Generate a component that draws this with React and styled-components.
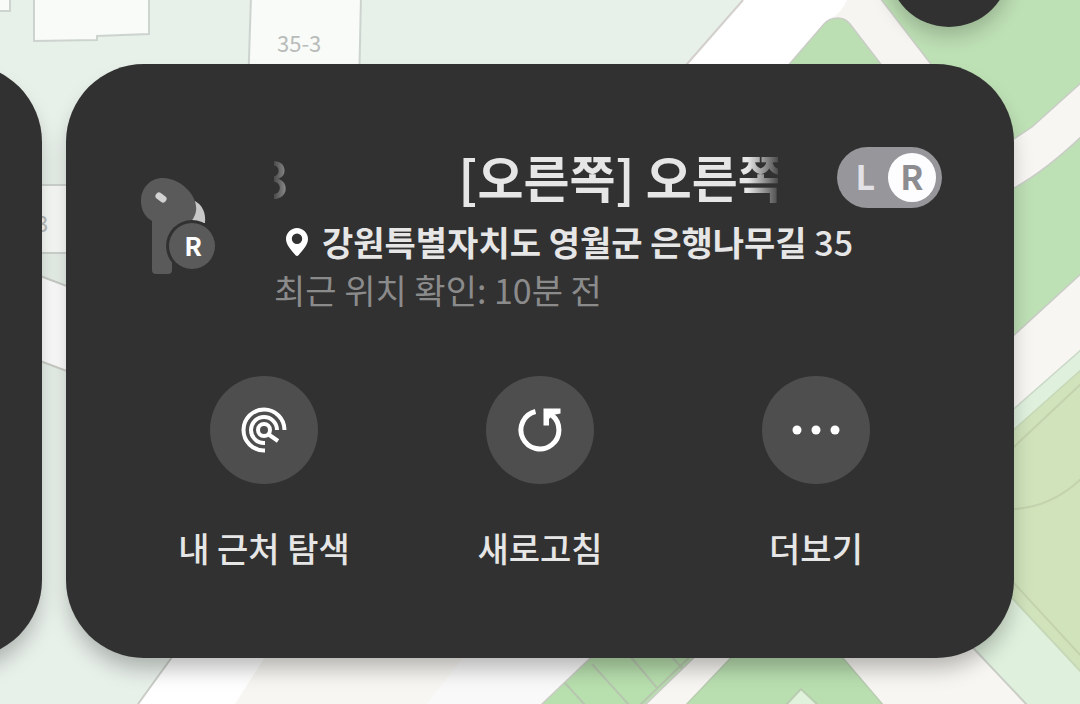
import React, { useState } from "react";
import styled, { createGlobalStyle } from "styled-components";

const GlobalStyle = createGlobalStyle`
  *, *::before, *::after { box-sizing: border-box; }
  body {
    margin: 0;
    font-family: "Noto Sans CJK KR", "Noto Sans", sans-serif;
    color: #e6e6e6;
    background: #e8f0ea;
  }
  button { font: inherit; color: inherit; border: 0; padding: 0; background: none; cursor: pointer; }
  h1, p { margin: 0; }
`;

const Screen = styled.div`
  position: relative;
  min-height: 100vh;
  overflow: hidden;
`;

const MapCanvas = styled.svg`
  position: absolute;
  inset: 0;
  width: 100%;
  height: 100%;
`;

const MapButton = styled.button`
  position: absolute;
  top: -95px;
  right: 70px;
  width: 122px;
  height: 122px;
  border-radius: 50%;
  background: #313131;
  box-shadow: 0 8px 20px rgba(0, 0, 0, 0.22);
`;

const Carousel = styled.main`
  position: relative;
  display: flex;
  gap: 24px;
  padding: 64px 66px 46px 0;
`;

const Panel = styled.section`
  border-radius: 78px;
  background: #313131;
  box-shadow: 0 14px 22px -4px rgba(0, 0, 0, 0.28);
`;

const PeekPanel = styled(Panel)`
  flex: none;
  width: 160px;
  margin-left: -118px;
`;

const DevicePanel = styled(Panel)`
  flex: 1;
  min-width: 0;
  padding: 83px 0 86px;
`;

const Header = styled.header`
  display: grid;
  grid-template-columns: 74px 1fr auto;
  grid-template-rows: 71px auto;
  column-gap: 59px;
  padding: 0 72px 0 75px;
`;

const BudArt = styled.svg`
  grid-row: 1 / 3;
  width: 74px;
  height: 95px;
  margin-top: 32px;
  overflow: visible;
`;

const Marquee = styled.h1`
  display: flex;
  gap: 170px;
  min-width: 0;
  overflow: hidden;
  white-space: pre;
  font-size: 50px;
  font-weight: 700;
  line-height: 58px;
  mask-image: linear-gradient(
    to right,
    rgba(0, 0, 0, 0.15) 0,
    #000 30px,
    #000 calc(100% - 30px),
    rgba(0, 0, 0, 0.15) 100%
  );
`;

const Leaving = styled.span`
  margin-left: -14px;
  font-weight: 500;
`;

const SideSwitch = styled.div`
  display: flex;
  justify-content: space-between;
  align-self: start;
  width: 105px;
  padding: 6px;
  border-radius: 31px;
  background: #96969b;
`;

const Side = styled.button`
  width: ${(p) => (p.$active ? 49 : 45)}px;
  height: 49px;
  padding-bottom: 4px;
  border-radius: 50%;
  font-size: 34px;
  font-weight: 700;
  line-height: 45px;
  text-align: center;
  color: ${(p) => (p.$active ? "#8c8c91" : "#e2e2e6")};
  background: ${(p) => (p.$active ? "#fdfdff" : "transparent")};
`;

const Details = styled.div`
  grid-column: 2 / 4;
  font-size: 34px;
  line-height: 48px;
  white-space: nowrap;
`;

const Address = styled.p`
  display: flex;
  align-items: center;
  gap: 14px;
  padding-left: 12px;
  font-weight: 700;
`;

const HouseNumber = styled.span`
  font-weight: 500;
`;

const Checked = styled.p`
  color: #8b8b8c;
`;

const Actions = styled.nav`
  display: grid;
  grid-template-columns: repeat(3, 1fr);
  padding: 62px 60px 0;
`;

const Action = styled.button`
  display: flex;
  flex-direction: column;
  align-items: center;
  gap: 40px;
  font-size: 34px;
  font-weight: 500;
  line-height: 48px;
  white-space: nowrap;
`;

const Disc = styled.span`
  display: grid;
  place-items: center;
  width: 108px;
  height: 108px;
  border-radius: 50%;
  background: #4e4e4e;
`;

function StreetMap() {
  const edge = "#c9cdc6";
  return (
    <MapCanvas viewBox="0 0 1080 704" preserveAspectRatio="xMidYMid slice" aria-hidden="true">
      <rect width="1080" height="704" fill="#e8f0ea" />
      <g fill="#f8fbf8" stroke="#cdd4cf" strokeWidth="2">
        <path d="M-4-4H10V11H-4Z" />
        <path d="M34-4V41L97 40V36L149 34V-4Z" />
        <path d="M251-4L248 90H359L361-4Z" />
        <path d="M-10 185H120V253H-10Z" />
      </g>
      <g fill="#b9bcba" fontSize="22" fontFamily="'Noto Sans CJK KR', sans-serif">
        <text x="277" y="52">35-3</text>
        <text x="36" y="232">3</text>
      </g>
      <path d="M0 261L120 306V391L0 346Z" fill="#fdfdfd" stroke={edge} strokeWidth="2" />

      <path d="M743 0L600 164V300H1080V0Z" fill="#fff" />
      <path d="M743 0L680 72" stroke="#d3cfcc" strokeWidth="2" />
      <path d="M847 0Q842 12 832 18L900 100H960L884 0Z" fill="#f7f5f2" />
      <path d="M780 75L824 24Q829 18 838 18Q845 18 850 24L890 76Z" fill="#bbdfb2" stroke={edge} strokeWidth="1.5" />
      <path d="M1000 40H1080V704H1000Z" fill="#f7f6f3" />
      <path d="M880-2L940 76L1000 150L1014 139L1032 127L1082 82V-2Z" fill="#bee0b5" stroke={edge} strokeWidth="1.5" />
      <path d="M1000 196L1014 188Q1045 171 1082 136V273L1000 348Z" fill="#bee0b5" stroke={edge} strokeWidth="1.5" />
      <path d="M1000 421L1082 349V720H1040L960 634Z" fill="#dff0dd" stroke="#cbd8c8" strokeWidth="1.5" />
      <path d="M1000 442L1082 369V673L1000 585Z" fill="#d0e3bb" stroke="#c6d8b8" strokeWidth="1.5" />
      <path d="M1000 460L1082 383M1014 509Q1052 507 1082 478M1000 568L1082 657" fill="none" stroke="#c4d3ad" strokeWidth="2" />

      <path d="M180 646L138 704H1026L975 646Z" fill="#f7f6f2" />
      <path d="M180 646L138 704H235L272 646Z" fill="#fff" />
      <path d="M472 646L427 704H541L600 646Z" fill="#f9f9f9" />
      <path d="M180 646L138 704" stroke={edge} strokeWidth="2" />
      <path d="M603 646L541 705H645L706 646Z" fill="#b8dfae" stroke={edge} strokeWidth="1.5" />
      <path d="M701 646L640 705M592 664L629 705M630 656L657 688M565 683L585 705M671 656L682 668" stroke="#b7c7af" strokeWidth="2" />
      <path d="M744 644L685 706H884L831 644Z" fill="#b9dfb0" stroke="#b9cdb1" strokeWidth="1.5" />
      <path d="M785 706L801 689L819 706Z" fill="#e0f1dc" stroke="#b9cdb1" strokeWidth="2" />
      <path d="M960 634L1028 706L1082 706V673L1000 585Z" fill="#dff0dd" />
      <path d="M960 634L1028 706" stroke={edge} strokeWidth="2" />
      <path d="M1000 585L1082 673" stroke="#c6d8b8" strokeWidth="2" />
    </MapCanvas>
  );
}

function RightBud() {
  return (
    <BudArt viewBox="0 0 74 95" role="img" aria-label="오른쪽 이어버드">
      <path d="M54 22C61 26 65 33 64 44H48Z" fill="#c8c8c8" />
      <path
        d="M22 -1C31 -1 41 4 48 12C53 18 56 25 55 32C54 38 50 44 44 48L31 60V91Q31 95 27 95H15Q11 95 11 91V42C4 38 0 31 0 22C0 9 9 -1 22 -1Z"
        fill="#5a5a5a"
      />
      <path d="M18 17L22 20" stroke="#d2d2d2" strokeWidth="7" strokeLinecap="round" />
      <circle cx="51" cy="67" r="26" fill="#313131" />
      <circle cx="51" cy="67" r="23" fill="#5a5a5a" />
      <text x="52" y="77" textAnchor="middle" fontSize="26" fontWeight="700" fill="#fff">R</text>
    </BudArt>
  );
}

const PinIcon = () => (
  <svg width="22" height="28" viewBox="0 0 22 28" aria-hidden="true">
    <path
      d="M11 0C17 0 22 5 22 11C22 17 16 23 12.500 27.200Q11 28.600 9.500 27.200C6 23 0 17 0 11C0 5 5 0 11 0ZM11 5.500A5.200 5.200 0 1 0 11 15.900A5.200 5.200 0 1 0 11 5.500Z"
      fill="#fff"
      fillRule="evenodd"
    />
  </svg>
);

const NearbyIcon = () => (
  <svg width="48" height="48" viewBox="-24 -24 48 48" fill="none" stroke="#fff" strokeWidth="4" aria-hidden="true">
    <path d="M20.500 0A20.500 20.500 0 1 0 0 20.500H1" />
    <path d="M13 0A13 13 0 1 0 0 13H1" />
    <circle r="6" />
    <path d="M4 4L14 11" />
  </svg>
);

const RefreshIcon = () => (
  <svg width="48" height="48" viewBox="-24 -24 48 48" aria-hidden="true">
    <path d="M-4.500 -18.500A19 19 0 1 0 12 -14.700" fill="none" stroke="#fff" strokeWidth="5" />
    <path d="M3.500 -21.500H20.500V-16.500L13 -15L9 -11V-4.500H3.500Z" fill="#fff" />
  </svg>
);

const MoreIcon = () => (
  <svg width="48" height="48" viewBox="-24 -24 48 48" fill="#fff" aria-hidden="true">
    <circle cx="-19" r="4.500" />
    <circle r="4.500" />
    <circle cx="19" r="4.500" />
  </svg>
);

const actions = [
  { label: "내 근처 탐색", Icon: NearbyIcon },
  { label: "새로고침", Icon: RefreshIcon },
  { label: "더보기", Icon: MoreIcon },
];

export default function App() {
  const [side, setSide] = useState("R");
  return (
    <Screen>
      <GlobalStyle />
      <StreetMap />
      <MapButton type="button" />
      <Carousel>
        <PeekPanel />
        <DevicePanel>
          <Header>
            <RightBud />
            <Marquee>
              <Leaving>3</Leaving>
              <span>[오른쪽] 오른쪽</span>
            </Marquee>
            <SideSwitch>
              {["L", "R"].map((s) => (
                <Side key={s} type="button" $active={side === s} aria-pressed={side === s} onClick={() => setSide(s)}>
                  {s}
                </Side>
              ))}
            </SideSwitch>
            <Details>
              <Address>
                <PinIcon />
                <span>
                  강원특별자치도 영월군 은행나무길 <HouseNumber>35</HouseNumber>
                </span>
              </Address>
              <Checked>최근 위치 확인: 10분 전</Checked>
            </Details>
          </Header>
          <Actions>
            {actions.map(({ label, Icon }) => (
              <Action key={label} type="button">
                <Disc>
                  <Icon />
                </Disc>
                {label}
              </Action>
            ))}
          </Actions>
        </DevicePanel>
      </Carousel>
    </Screen>
  );
}
